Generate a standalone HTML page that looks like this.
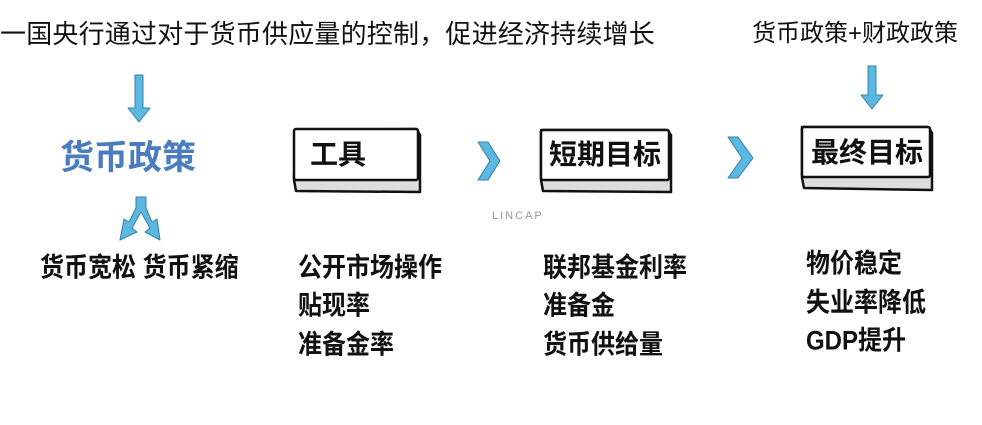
<!DOCTYPE html>
<html><head><meta charset="utf-8"><style>
body{margin:0;width:982px;height:425px;background:#fff;position:relative;overflow:hidden;font-family:"Liberation Sans","Noto Sans CJK SC",sans-serif;}
.t{position:absolute;white-space:nowrap;color:#111;font-weight:bold;line-height:1;}
.l{font-size:24px;transform:scaleY(1.12);transform-origin:0 0;}
svg{position:absolute;left:0;top:0;}
</style></head><body>
<svg width="982" height="425">
<g fill="#5bb8e0" stroke="#3a7fa6" stroke-width="1" stroke-linejoin="round">
<polygon points="135,75 143,75 143,108 150,108 139,122 128,108 135,108"/>
<polygon points="868,66 876,66 876,95 883,95 872,109 861,95 868,95"/>
<polygon points="136,197 146,197 146,208 152,222 157,219 160,240 145,232 150,228 141,212 132,228 137,232 120,240 124,219 129,222 136,208"/>
<polygon points="478,142 488,142 500,161 488,180 478,180 490,161"/>
<polygon points="728,137 738,137 753,158 738,178 728,178 742,158"/>
</g>
<g stroke="#111" stroke-width="2.5" fill="#fff" stroke-linejoin="round">
<path d="M295,130 L416,129 L420,135 L420,192 L296,191 L294,180 Z" fill="#ddd"/>
<rect x="294" y="129" width="124" height="51" rx="2"/>
<path d="M541,130 L667,130 L671,135 L671,192 L543,191 L541,180 Z" fill="#ddd"/>
<rect x="541" y="130" width="128" height="50" rx="2"/>
<path d="M802,127 L928,127 L932,133 L932,190 L804,188 L802,178 Z" fill="#ddd"/>
<rect x="802" y="127" width="128" height="50" rx="2"/>
</g>
</svg>
<div class="t" style="left:0;top:21px;font-size:26px;font-weight:normal;letter-spacing:0.2px">一国央行通过对于货币供应量的控制，促进经济持续增长</div>
<div class="t" style="left:752px;top:22px;font-size:24px;font-weight:normal">货币政策+财政政策</div>
<div class="t" style="left:60px;top:141px;font-size:34px;color:#4a7cc0">货币政策</div>
<div class="t l" style="left:40px;top:255px">货币宽松 货币紧缩</div>
<div class="t" style="left:310px;top:141px;font-size:28px">工具</div>
<div class="t" style="left:549px;top:141px;font-size:28px">短期目标</div>
<div class="t" style="left:811px;top:139px;font-size:28px">最终目标</div>
<div class="t" style="left:492px;top:211px;font-size:11px;font-weight:normal;color:#999;letter-spacing:2px">LINCAP</div>
<div class="t l" style="left:298px;top:255px">公开市场操作</div>
<div class="t l" style="left:298px;top:293px">贴现率</div>
<div class="t l" style="left:298px;top:332px">准备金率</div>
<div class="t l" style="left:543px;top:255px">联邦基金利率</div>
<div class="t l" style="left:543px;top:293px">准备金</div>
<div class="t l" style="left:543px;top:332px">货币供给量</div>
<div class="t l" style="left:806px;top:251px">物价稳定</div>
<div class="t l" style="left:806px;top:290px">失业率降低</div>
<div class="t l" style="left:806px;top:328px">GDP提升</div>
</body></html>
